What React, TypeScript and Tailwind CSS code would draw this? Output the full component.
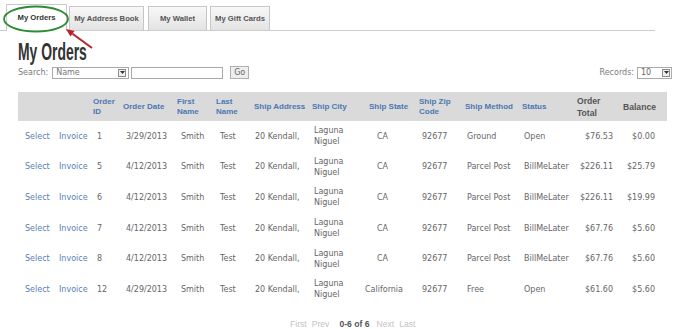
import React from "react";

type Order = {
    id: string;
    date: string;
    first: string;
    last: string;
    address: string;
    city: string;
    state: string;
    zip: string;
    method: string;
    status: string;
    total: string;
    balance: string;
};

const orders: Order[] = [
    { id: "1", date: "3/29/2013", first: "Smith", last: "Test", address: "20 Kendall,", city: "Laguna Niguel", state: "CA", zip: "92677", method: "Ground", status: "Open", total: "$76.53", balance: "$0.00" },
    { id: "5", date: "4/12/2013", first: "Smith", last: "Test", address: "20 Kendall,", city: "Laguna Niguel", state: "CA", zip: "92677", method: "Parcel Post", status: "BillMeLater", total: "$226.11", balance: "$25.79" },
    { id: "6", date: "4/12/2013", first: "Smith", last: "Test", address: "20 Kendall,", city: "Laguna Niguel", state: "CA", zip: "92677", method: "Parcel Post", status: "BillMeLater", total: "$226.11", balance: "$19.99" },
    { id: "7", date: "4/12/2013", first: "Smith", last: "Test", address: "20 Kendall,", city: "Laguna Niguel", state: "CA", zip: "92677", method: "Parcel Post", status: "BillMeLater", total: "$67.76", balance: "$5.60" },
    { id: "8", date: "4/12/2013", first: "Smith", last: "Test", address: "20 Kendall,", city: "Laguna Niguel", state: "CA", zip: "92677", method: "Parcel Post", status: "BillMeLater", total: "$67.76", balance: "$5.60" },
    { id: "12", date: "4/29/2013", first: "Smith", last: "Test", address: "20 Kendall,", city: "Laguna Niguel", state: "California", zip: "92677", method: "Free", status: "Open", total: "$61.60", balance: "$5.60" },
];

const widths = ["w-[37px]", "w-[34px]", "w-[30px]", "w-[54px]", "w-[39px]", "w-[38px]", "w-[58px]", "w-[57px]", "w-[50px]", "w-[46px]", "w-[57px]", "w-[55px]", "w-[46px]", "w-[48px]"];

const blueHeaders = ["", "", "Order ID", "Order Date", "First Name", "Last Name", "Ship Address", "Ship City", "Ship State", "Ship Zip Code", "Ship Method", "Status"];

function DropArrow() {
    return (
        <span className="flex items-center justify-center w-[8px] h-[8px] border border-[#8a8a8a] bg-[#efefef]">
            <svg width="5" height="3" viewBox="0 0 5 3">
                <path d="M0 0 L5 0 L2.5 3 Z" fill="#333" />
            </svg>
        </span>
    );
}

function Tab({ label, width, active }: { label: string; width: string; active?: boolean }) {
    if (active) {
        return (
            <div className={`${width} h-[27px] -mb-px relative bg-white border border-b-0 border-[#c9c9c9] flex items-center justify-center text-[#333]`}>
                {label}
            </div>
        );
    }
    return (
        <div className={`${width} h-[24px] bg-linear-to-b from-[#f8f8f8] to-[#e3e3e3] border border-b-0 border-[#c6c6c6] flex items-center justify-center text-[#555]`}>
            {label}
        </div>
    );
}

export default function App() {
    return (
        <div className="relative w-[677px] h-[329px] bg-white overflow-hidden font-['DejaVu_Sans',sans-serif] text-[8px] text-[#666]">
            {/* Tabs */}
            <div className="flex items-end h-[31px] w-[655px] pl-[6px] border-b border-[#cccccc] font-['Liberation_Sans',Arial,sans-serif] font-bold text-[7.7px]">
                <Tab label="My Orders" width="w-[61px]" active />
                <div className="ml-[2px]"><Tab label="My Address Book" width="w-[75px]" /></div>
                <div className="ml-[4px]"><Tab label="My Wallet" width="w-[59px]" /></div>
                <div className="ml-[3px]"><Tab label="My Gift Cards" width="w-[60px]" /></div>
            </div>

            <div className="px-[18px]">
                <h1 className="mt-[9px] h-[24px] leading-[24px] font-['Liberation_Sans',Arial,sans-serif] font-bold text-[24px] text-[#333]">
                    <span className="inline-block origin-left scale-x-[0.58]">My Orders</span>
                </h1>

                {/* Search row */}
                <div className="mt-[2px] h-[13px] flex items-center -mr-[13px]">
                    <span className="text-[#7a7a7a]">Search:</span>
                    <div className="ml-[4px] w-[77px] h-[12px] border border-[#a9a9a9] bg-white flex items-center justify-between pl-[3px] pr-[2px] text-[#777]">
                        <span>Name</span>
                        <DropArrow />
                    </div>
                    <div className="ml-[2px] w-[92px] h-[12px] border border-[#a9a9a9] bg-white" />
                    <div className="ml-[7px] w-[19px] h-[13px] border border-[#b0b0b0] bg-[#eeeeee] flex items-center justify-center text-[#666]">Go</div>
                    <div className="flex-1" />
                    <span className="text-[#7a7a7a]">Records:</span>
                    <div className="ml-[3px] w-[35px] h-[12px] border border-[#a9a9a9] bg-white flex items-center justify-between pl-[3px] pr-[1px] text-[#666]">
                        <span>10</span>
                        <DropArrow />
                    </div>
                </div>

                {/* Orders table */}
                <table className="mt-[13px] w-[649px] table-fixed border-collapse">
                    <colgroup>
                        {widths.map((w, i) => (
                            <col key={i} className={w} />
                        ))}
                    </colgroup>
                    <thead>
                        <tr className="h-[29px] bg-[#dadada] font-['Liberation_Sans',Arial,sans-serif] font-bold">
                            {blueHeaders.map((h, i) => (
                                <th key={i} className="pl-[4px] pr-[2px] text-left align-middle text-[8px] leading-[10px] text-[#4a77b4]">
                                    {h}
                                </th>
                            ))}
                            <th className="pl-[4px] text-left align-middle text-[8.6px] leading-[12px] text-[#555]">Order Total</th>
                            <th className="pl-[4px] text-left align-middle text-[8.6px] leading-[12px] text-[#555]">Balance</th>
                        </tr>
                    </thead>
                    <tbody>
                        {orders.map((o) => (
                            <tr key={o.id} className="h-[30.6px] align-middle leading-[11px]">
                                <td className="pl-[7px] text-[#5a7db5]">Select</td>
                                <td className="pl-[4px] text-[#5a7db5]">Invoice</td>
                                <td className="pl-[8px]">{o.id}</td>
                                <td className="pl-[7px]">{o.date}</td>
                                <td className="pl-[8px]">{o.first}</td>
                                <td className="pl-[8px]">{o.last}</td>
                                <td className="pl-[5px]">{o.address}</td>
                                <td className="pl-[6px] pr-[2px]">{o.city}</td>
                                <td className={o.state === "CA" ? "pl-[12px]" : "pl-0"}>{o.state}</td>
                                <td className="pl-[7px]">{o.zip}</td>
                                <td className="pl-[6px]">{o.method}</td>
                                <td className="pl-[6px]">{o.status}</td>
                                <td className="pr-[6px] text-right">{o.total}</td>
                                <td className="pr-[12px] text-right">{o.balance}</td>
                            </tr>
                        ))}
                    </tbody>
                </table>

                {/* Pager */}
                <div className="mt-[14px] h-[11px] leading-[11px] flex items-center pl-[272px] font-['Liberation_Sans',Arial,sans-serif] text-[8.6px]">
                    <span className="text-[#c4c4c4]">First</span>
                    <span className="ml-[5px] text-[#c4c4c4]">Prev</span>
                    <span className="ml-[10px] text-[#555] font-bold">0-6 of 6</span>
                    <span className="ml-[7px] text-[#c4c4c4]">Next</span>
                    <span className="ml-[5px] text-[#c4c4c4]">Last</span>
                </div>
            </div>

            {/* Annotation: circle + arrow */}
            <svg className="absolute left-0 top-0 pointer-events-none" width="110" height="60" viewBox="0 0 110 60">
                <ellipse cx="36" cy="19" rx="32" ry="12.5" fill="none" stroke="#2f8a36" strokeWidth="1.8" />
                <line x1="92" y1="48" x2="72.5" y2="33.7" stroke="#b8232b" strokeWidth="2" />
                <polygon points="66,29 74.6,30.9 70.4,36.5" fill="#b8232b" />
            </svg>
        </div>
    );
}
